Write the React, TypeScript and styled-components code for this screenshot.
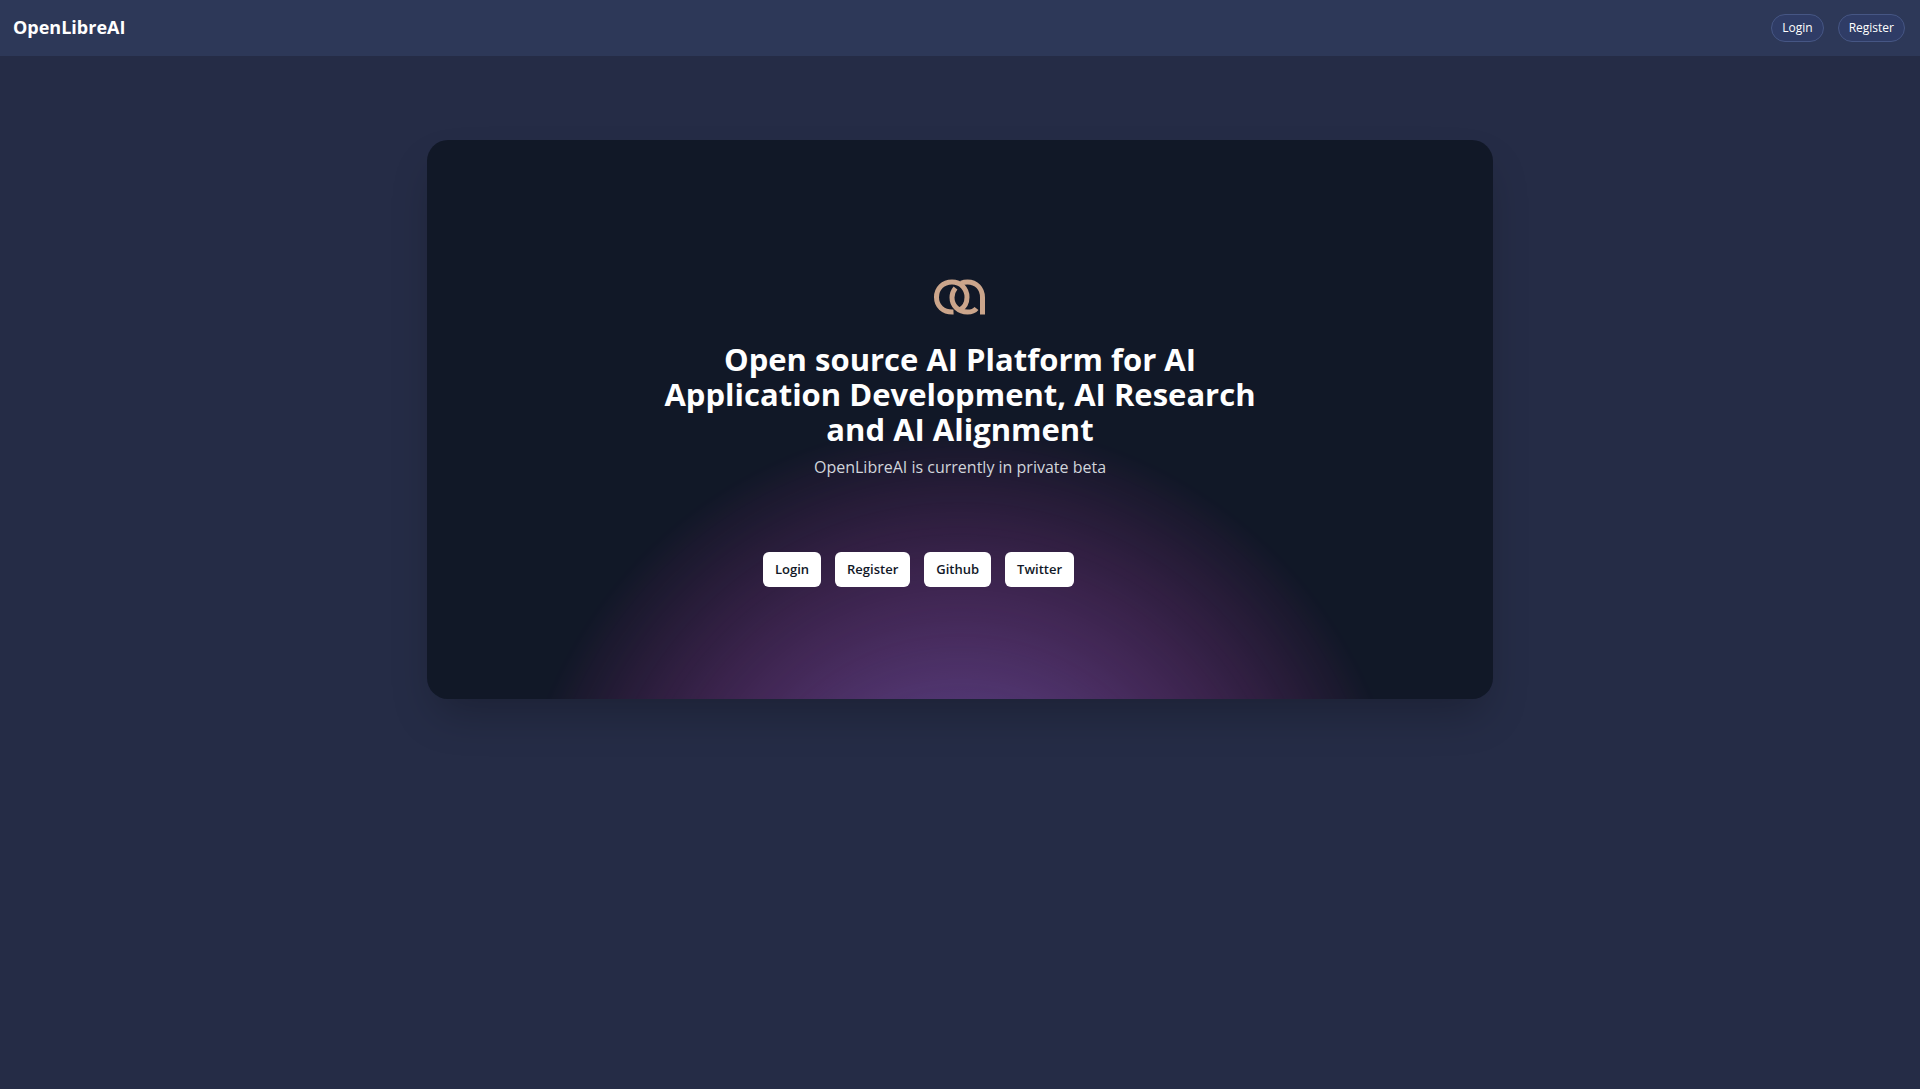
import React from "react";
import styled, { createGlobalStyle } from "styled-components";

const GlobalStyle = createGlobalStyle`
  *, *::before, *::after { box-sizing: border-box; }
  body {
    margin: 0;
    background: #252c46;
    color: #ffffff;
    font-family: "Open Sans", "Noto Sans", sans-serif;
  }
`;

const Header = styled.header`
  display: flex;
  align-items: center;
  justify-content: space-between;
  height: 56px;
  padding: 0 15px 0 13px;
  background: #2d3858;
`;

const Brand = styled.a`
  color: #ffffff;
  font-size: 18px;
  font-weight: 700;
  line-height: 24px;
  padding-bottom: 2px;
  text-decoration: none;
`;

const Nav = styled.nav`
  display: flex;
  gap: 14px;
`;

const PillButton = styled.button`
  height: 28px;
  padding: 0 10px;
  border: 1px solid #465684;
  border-radius: 14px;
  background: #2f3c66;
  color: #ffffff;
  font: 400 12px/16px "Open Sans", "Noto Sans", sans-serif;
  cursor: pointer;
`;

const Main = styled.main`
  padding: 84px 24px;
`;

const Card = styled.section`
  position: relative;
  isolation: isolate;
  overflow: hidden;
  display: flex;
  flex-direction: column;
  align-items: center;
  max-width: 1066px;
  margin: 0 auto;
  padding: 139px 64px 112px;
  border-radius: 21px;
  background: #111827;
  box-shadow: 0 22px 44px -10px rgba(0, 0, 0, 0.25);
  text-align: center;
`;

const Glow = styled.svg`
  position: absolute;
  z-index: -1;
  top: 50%;
  left: 50%;
  width: 896px;
  height: 896px;
  transform: translateX(-50%);
  mask-image: radial-gradient(closest-side, white, transparent);
`;

const Logo = styled.svg`
  display: block;
  width: 52px;
  height: 36px;
`;

const Title = styled.h1`
  max-width: 600px;
  margin: 27px 0 0;
  font-size: 31px;
  font-weight: 700;
  line-height: 35px;
`;

const Subtitle = styled.p`
  margin: 8px 0 0;
  color: #d1d5db;
  font-size: 16px;
  line-height: 24px;
`;

const Actions = styled.div`
  display: flex;
  gap: 14px;
  margin-top: 73px;
  padding-right: 83px;
`;

const ActionLink = styled.a`
  padding: 9px 12px;
  border-radius: 6px;
  background: #ffffff;
  color: #111827;
  font-size: 13px;
  font-weight: 600;
  line-height: 17px;
  text-decoration: none;
`;

const actions = ["Login", "Register", "Github", "Twitter"];

export default function App() {
  return (
    <>
      <GlobalStyle />
      <Header>
        <Brand href="#">OpenLibreAI</Brand>
        <Nav>
          <PillButton type="button">Login</PillButton>
          <PillButton type="button">Register</PillButton>
        </Nav>
      </Header>
      <Main>
        <Card>
          <Glow viewBox="0 0 1024 1024" aria-hidden="true">
            <defs>
              <radialGradient id="glow">
                <stop stopColor="#7775D6" />
                <stop offset="1" stopColor="#E935C1" />
              </radialGradient>
            </defs>
            <circle cx="512" cy="512" r="512" fill="url(#glow)" fillOpacity="0.7" />
          </Glow>
          <Logo viewBox="0 0 52 36" fill="none" stroke="#cba58b" strokeWidth="5" aria-hidden="true">
            <path d="M19.5 33C9 33.5 2.5 27 2.5 18.2C2.5 9.500 9 3 18 3C27 3 33 10 33 18.2C33 24.500 29.500 29 25.500 31" />
            <path d="M21.500 9C19 12 18 15 18 18.500C18 27 24.500 33 33.500 33C37.500 33 40.500 32 42.500 29.500" />
            <path d="M27 4.200C29 3.400 31 3 33.500 3C42.500 3 48.500 9.500 48.500 18.500V35.500" />
          </Logo>
          <Title>Open source AI Platform for AI Application Development, AI Research and AI Alignment</Title>
          <Subtitle>OpenLibreAI is currently in private beta</Subtitle>
          <Actions>
            {actions.map((label) => (
              <ActionLink href="#" key={label}>{label}</ActionLink>
            ))}
          </Actions>
        </Card>
      </Main>
    </>
  );
}
